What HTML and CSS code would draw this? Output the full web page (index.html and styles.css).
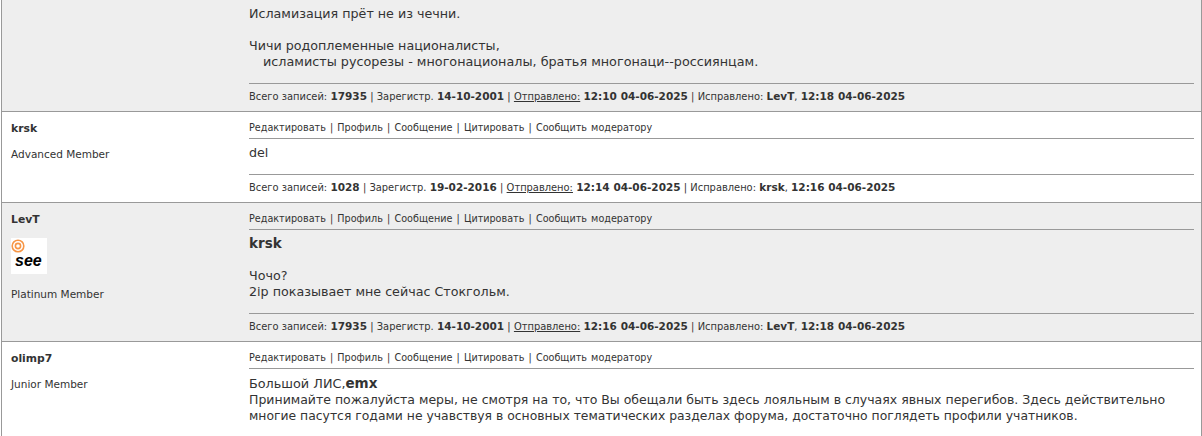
FILE: index.html
```html
<!DOCTYPE html>
<html lang="ru">
<head>
<meta charset="utf-8">
<title>Форум</title>
<link rel="stylesheet" href="styles.css">
</head>
<body>
<div class="thread">
  <div class="post alt first">
    <div class="author"></div>
    <div class="main">
      <div class="body b1">Исламизация прёт не из чечни.<br><br>Чичи родоплеменные националисты,<br><span class="ind">исламисты русорезы - многонационалы, братья многонаци--россиянцам.</span></div>
      <div class="foot">Всего записей: <b>17935</b> | Зарегистр. <b>14-10-2001</b> | <u>Отправлено:</u> <b>12:10 04-06-2025</b> | Исправлено: <b>LevT</b>, <b>12:18 04-06-2025</b></div>
    </div>
  </div>
  <div class="post">
    <div class="author"><div class="name">krsk</div><div class="rank">Advanced Member</div></div>
    <div class="main">
      <div class="tools">Редактировать | Профиль | Сообщение | Цитировать | Сообщить модератору</div>
      <div class="body b2">del</div>
      <div class="foot">Всего записей: <b>1028</b> | Зарегистр. <b>19-02-2016</b> | <u>Отправлено:</u> <b>12:14 04-06-2025</b> | Исправлено: <b>krsk</b>, <b>12:16 04-06-2025</b></div>
    </div>
  </div>
  <div class="post alt">
    <div class="author">
      <div class="name">LevT</div>
      <div class="avatar">
        <svg class="ring" width="14" height="14" viewBox="0 0 14 14"><circle cx="7" cy="7" r="5.8" fill="none" stroke="#f79646" stroke-width="1.6"/><circle cx="7" cy="7" r="2.6" fill="none" stroke="#f79646" stroke-width="1.6"/></svg>
        <span class="see">see</span>
      </div>
      <div class="rank">Platinum Member</div>
    </div>
    <div class="main">
      <div class="tools">Редактировать | Профиль | Сообщение | Цитировать | Сообщить модератору</div>
      <div class="body b3"><b>krsk</b><br><br>Чочо?<br>2ip показывает мне сейчас Стокгольм.</div>
      <div class="foot">Всего записей: <b>17935</b> | Зарегистр. <b>14-10-2001</b> | <u>Отправлено:</u> <b>12:16 04-06-2025</b> | Исправлено: <b>LevT</b>, <b>12:18 04-06-2025</b></div>
    </div>
  </div>
  <div class="post last">
    <div class="author"><div class="name">olimp7</div><div class="rank">Junior Member</div></div>
    <div class="main">
      <div class="tools">Редактировать | Профиль | Сообщение | Цитировать | Сообщить модератору</div>
      <div class="body b4"><span class="greet">Большой ЛИС,</span><b>emx</b><br>Принимайте пожалуйста меры, не смотря на то, что Вы обещали быть здесь лояльным в случаях явных перегибов. Здесь действительно <span class="tail">многие пасутся годами не учавствуя в основных тематических разделах форума, достаточно поглядеть профили учатников.</span></div>
    </div>
  </div>
</div>
</body>
</html>
```

FILE: styles.css
```css
html, body {
  margin: 0;
  padding: 0;
  background: #fff;
  overflow: hidden;
}
body {
  height: 436px;
  font-family: Verdana, "DejaVu Sans", sans-serif;
  color: #333;
}
.thread {
  margin-left: 1px;
  width: 1201px;
  box-sizing: border-box;
  border-left: 1px solid #999;
  border-right: 1px solid #999;
  height: 436px;
  overflow: hidden;
}
.post {
  display: grid;
  grid-template-columns: 247px 945px;
  border-bottom: 1px solid #999;
  box-sizing: border-box;
  background: #fff;
}
.post.alt { background: #eee; }
.post.first { height: 112px; }
.post:nth-child(2) { height: 91px; }
.post:nth-child(3) { height: 139px; }
.post.last { border-bottom: 0; }
.author {
  padding: 9px 0 0 9px;
  font-size: 10.5px;
  line-height: 14px;
}
.name { font-weight: bold; font-size: 10.8px; line-height: 15px; margin-bottom: 11px; }
.avatar {
  position: relative;
  width: 36px;
  height: 36px;
  background: #fff;
  margin-bottom: 13px;
}
.ring { position: absolute; left: 0; top: 1px; }
.see {
  position: absolute;
  left: 4px;
  top: 14px;
  font: italic 900 16px/18px "Liberation Sans", sans-serif;
  color: #000;
}
.main {
  padding: 0;
  display: flex;
  flex-direction: column;
}
.tools {
  font-size: 9.65px;
  word-spacing: 1.1px;
  line-height: 14px;
  padding-top: 9px;
  padding-bottom: 3px;
  border-bottom: 1px solid #999;
}
.body {
  font-size: 12.7px;
  line-height: 16px;
}
.b1 { padding-top: 6px; height: 83px; box-sizing: border-box; }
.ind { padding-left: 14px; font-size: 12.78px; }
.b2 { padding-top: 6px; height: 35px; box-sizing: border-box; }
.b3 { padding-top: 5px; height: 83px; box-sizing: border-box; }
.b3 b { font-size: 13.5px; }
.b4 { padding-top: 6px; font-size: 12.5px; }
.greet { font-size: 12.8px; }
.tail { font-size: 12.38px; }
.b4 b { font-size: 13.5px; }
.foot {
  border-top: 1px solid #999;
  font-size: 9.88px;
  word-spacing: 0.1px;
  line-height: 14px;
  padding-top: 5px;
}
.foot b { font-size: 10.5px; }
```
